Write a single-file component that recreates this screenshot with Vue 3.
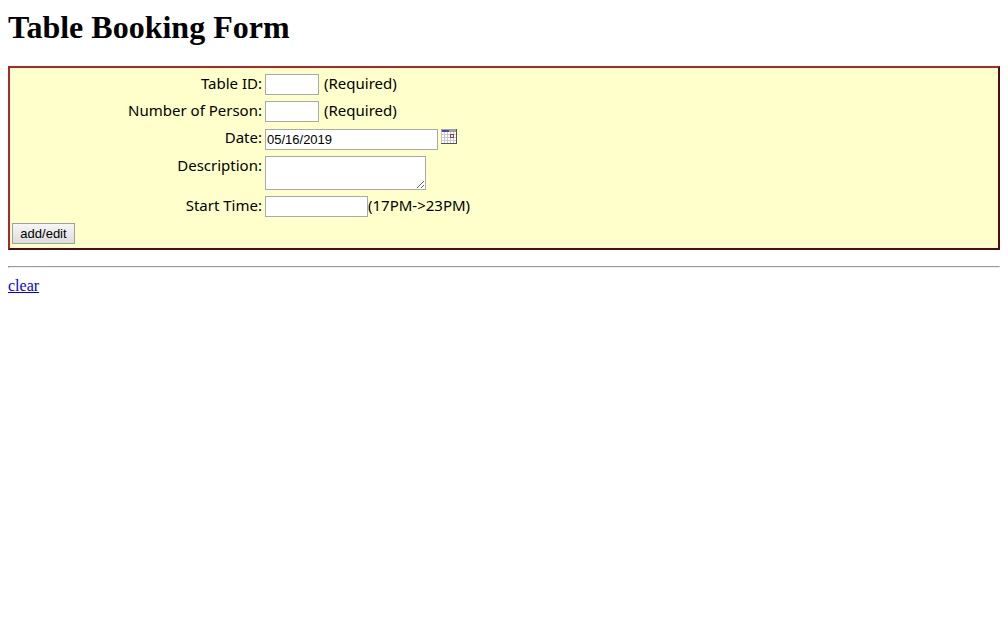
<script setup>
import { ref } from 'vue'

const emptyForm = () => ({ tableId: '', persons: '', date: '05/16/2019', description: '', startTime: '' })
const form = ref(emptyForm())
const clearForm = () => { form.value = emptyForm() }
</script>

<template>
  <main class="page">
    <h1>Table Booking Form</h1>
    <form class="booking" @submit.prevent>
      <div class="row">
        <label for="table-id">Table ID:</label>
        <div class="field">
          <input id="table-id" v-model="form.tableId" class="short" type="text">
          <span class="note">(Required)</span>
        </div>
      </div>
      <div class="row">
        <label for="persons">Number of Person:</label>
        <div class="field">
          <input id="persons" v-model="form.persons" class="short" type="text">
          <span class="note">(Required)</span>
        </div>
      </div>
      <div class="row date-row">
        <label for="date">Date:</label>
        <div class="field">
          <input id="date" v-model="form.date" class="date" type="text">
          <button class="picker" type="button" aria-label="Pick a date">
            <svg width="16" height="15" viewBox="0 0 16 15" shape-rendering="crispEdges">
              <path fill="#fff" d="M0 0h16v15H0z" />
              <path fill="#c8c8d0" d="M0 0h1v15H0zM3 3h1v11H3zM6 3h1v11H6zM9 3h1v11H9zM12 3h1v11h-1zM1 5h14v1H1zM1 8h14v1H1zM1 11h14v1H1z" />
              <path fill="#a0a0a8" d="M0 0h16v3H0z" />
              <path fill="#4848b0" d="M1 1h7v2H1z" />
              <path fill="#505060" d="M15 0h1v15h-1zM0 14h16v1H0z" />
              <path fill="#a03838" fill-rule="evenodd" d="M9 5h4v4H9zM10 6v2h2V6z" />
            </svg>
          </button>
        </div>
      </div>
      <div class="row">
        <label for="description">Description:</label>
        <div class="field">
          <textarea id="description" v-model="form.description"></textarea>
        </div>
      </div>
      <div class="row">
        <label for="start-time">Start Time:</label>
        <div class="field">
          <input id="start-time" v-model="form.startTime" class="time" type="text">
          <span>(17PM-&gt;23PM)</span>
        </div>
      </div>
      <button class="submit" type="submit">add/edit</button>
    </form>
    <hr>
    <a href="#" @click.prevent="clearForm">clear</a>
  </main>
</template>

<style scoped>
.page {
  padding: 8px;
  font: 16px/20px "Liberation Serif", serif;
  color: #000;
}

h1 {
  margin: 0 0 20px;
  font-size: 32px;
  line-height: 38px;
}

.booking {
  display: flex;
  flex-direction: column;
  gap: 6px;
  padding: 6px 2px 4px;
  border: 2px solid;
  border-color: #a52a2a #4c1014 #4c1014 #a52a2a;
  background: #ffffcc;
  font: 15px/18px "Trebuchet MS", "Noto Sans", sans-serif;
}

.row {
  display: grid;
  grid-template-columns: 250px 1fr;
  column-gap: 3px;
}

.row label {
  text-align: right;
}

.field {
  display: flex;
  align-items: flex-start;
}

.date-row .field {
  padding-top: 1px;
}

input,
textarea {
  box-sizing: border-box;
  height: 21px;
  margin: 0;
  padding: 1px;
  border: 1px solid #a9a9a9;
  border-radius: 0;
  background: #fff;
  color: #000;
  font: 13px/17px "Liberation Sans", sans-serif;
}

.short {
  width: 54px;
}

.date {
  width: 173px;
}

.time {
  width: 103px;
}

textarea {
  width: 161px;
  height: 34px;
}

.note {
  margin-left: 5px;
}

.picker {
  display: block;
  margin: 0 0 0 3px;
  padding: 0;
  border: 0;
  background: none;
}

.picker svg {
  display: block;
}

.submit {
  align-self: flex-start;
  min-width: 63px;
  height: 21px;
  margin: 0;
  padding: 0 7px;
  border: 1px solid #a0a0a0;
  border-radius: 0;
  background: linear-gradient(#f6f6f6, #dddddd);
  color: #000;
  font: 13px/19px "Liberation Sans", sans-serif;
}

hr {
  margin: 16px 0 8px;
  border: 1px solid;
  border-color: #9a9a9a #eeeeee #eeeeee #9a9a9a;
}

a {
  color: #0000ee;
}
</style>
